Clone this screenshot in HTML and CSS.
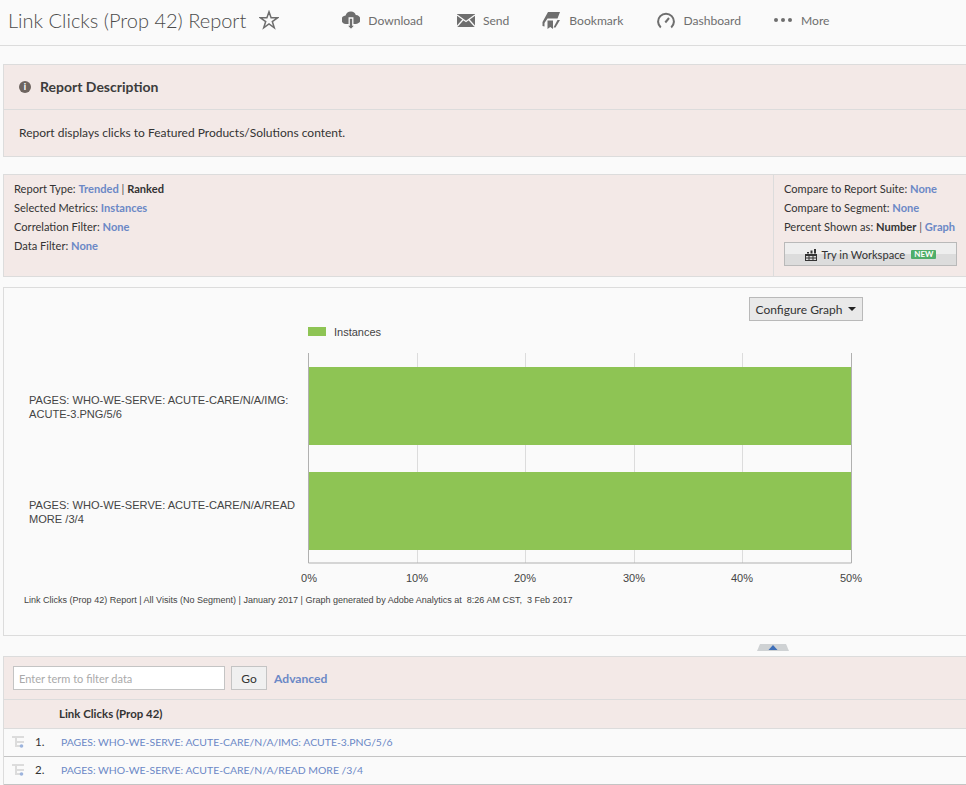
FILE: index.html
```html
<!DOCTYPE html>
<html lang="en">
<head>
<meta charset="utf-8">
<title>Link Clicks (Prop 42) Report</title>
<link rel="stylesheet" href="styles.css">
</head>
<body>
<header class="topbar">
  <h1 class="title">Link Clicks (Prop 42) Report</h1>
  <svg class="star" viewBox="0 0 20 20" width="20" height="20"><path d="M10 1.800l2.100 6h6.400l-5.200 3.800 2 6.200L10 14l-5.300 3.800 2-6.200L1.500 7.800h6.400z" fill="none" stroke="#6e6e6e" stroke-width="1.500"/></svg>
  <nav class="actions">
    <a class="action act-download"><svg viewBox="0 0 18 19" width="18" height="19"><path fill="#6e6e6e" d="M9 0.500a5 5 0 0 1 4.800 3.500A4.300 4.300 0 0 1 14 13H4A4.300 4.300 0 0 1 3.600 4.400 5.500 5.500 0 0 1 9 0.500z"/><path fill="#6e6e6e" stroke="#fafafa" stroke-width="1.300" d="M7.200 7h3.600v7h2.700L9 18.800 4.500 14h2.700z"/></svg>Download</a>
    <a class="action act-send"><svg viewBox="0 0 18 13" width="18" height="13"><path fill="#6e6e6e" d="M0 0h18v13H0z"/><path fill="none" stroke="#fafafa" stroke-width="1.300" d="M0 1l9 6.500L18 1M0 12.500l6-6.700M18 12.500l-6-6.700"/></svg>Send</a>
    <a class="action act-bookmark"><svg viewBox="0 0 18 18" width="18" height="18"><path fill="#6e6e6e" d="M6 1h12l-2.500 6.500H5.500L2.500 12v3.500L0.500 15v-4z"/><path fill="#6e6e6e" d="M5.500 9.500h5.500v8.500L8.300 16 5.500 18z"/><path fill="#6e6e6e" d="M15.500 9h2.500l-4.500 7.500h-2z"/></svg>Bookmark</a>
    <a class="action act-dash"><svg viewBox="0 0 18 17" width="18" height="17"><path fill="none" stroke="#6e6e6e" stroke-width="2" d="M3.800 15.500a7.900 7.900 0 1 1 10.400 0"/><path fill="none" stroke="#6e6e6e" stroke-width="2" d="M8.300 10.500L12 6"/></svg>Dashboard</a>
    <a class="action act-more"><span class="dots"><i></i><i></i><i></i></span>More</a>
  </nav>
</header>

<section class="panel desc">
  <div class="desc-head"><span class="info">i</span><h2>Report Description</h2></div>
  <p class="desc-body">Report displays clicks to Featured Products/Solutions content.</p>
</section>

<section class="panel meta">
  <div class="meta-left">
    <div>Report Type: <a>Trended</a> <span class="sep">|</span> <b>Ranked</b></div>
    <div>Selected Metrics: <a>Instances</a></div>
    <div>Correlation Filter: <a>None</a></div>
    <div>Data Filter: <a>None</a></div>
  </div>
  <div class="meta-right">
    <div>Compare to Report Suite: <a>None</a></div>
    <div>Compare to Segment: <a>None</a></div>
    <div>Percent Shown as: <b>Number</b> <span class="sep">|</span> <a>Graph</a></div>
    <button class="workspace"><svg viewBox="0 0 12 12" width="12" height="12"><path fill="#333" d="M0 5h12v7H0zm1 2v1.500h2.500V7zm3.500 0v1.500h3V7zm4 0v1.500H11V7zM1 9.500V11h2.500V9.500zm3.500 0V11h3V9.500zm4 0V11H11V9.500zM2 3h2v1.500H2zM5.500 1.500h2v3h-2zM9 0h2v4.500H9z"/></svg>Try in Workspace<span class="new">NEW</span></button>
  </div>
</section>

<section class="panel graph">
  <button class="configure">Configure Graph<span class="caret"></span></button>
  <svg class="chart" width="962" height="347" viewBox="4 288 962 347">
    <rect x="308" y="327" width="18" height="9" fill="#8ec454"/>
    <text class="legend" x="334" y="336">Instances</text>
    <g stroke="#dcdcdc" stroke-width="1">
      <path d="M417.500 353v210M525.500 353v210M634.500 353v210M742.500 353v210"/>
    </g>
    <rect x="309" y="367" width="542" height="78" fill="#8ec454"/>
    <rect x="309" y="472" width="542" height="78" fill="#8ec454"/>
    <path d="M308.500 353v210h543V353" fill="none" stroke="#b0b0b0"/>
    <text class="cat" x="29" y="404">PAGES: WHO-WE-SERVE: ACUTE-CARE/N/A/IMG:</text>
    <text class="cat" x="29" y="418">ACUTE-3.PNG/5/6</text>
    <text class="cat" x="29" y="509">PAGES: WHO-WE-SERVE: ACUTE-CARE/N/A/READ</text>
    <text class="cat" x="29" y="523">MORE /3/4</text>
    <g class="tick">
      <text x="309" y="582">0%</text><text x="417" y="582">10%</text><text x="525" y="582">20%</text>
      <text x="634" y="582">30%</text><text x="742" y="582">40%</text><text x="851" y="582">50%</text>
    </g>
    <text class="foot" x="24" y="603" xml:space="preserve">Link Clicks (Prop 42) Report | All Visits (No Segment) | January 2017 | Graph generated by Adobe Analytics at  8:26 AM CST,  3 Feb 2017</text>
  </svg>
</section>

<div class="collapse"><svg viewBox="0 0 32 7" width="32" height="7"><path fill="#cfd2d4" d="M3 0h26l3 7H0z"/><path fill="#3f6fb8" d="M16 1l4.500 5h-9z"/></svg></div>

<section class="panel results">
  <div class="filter">
    <input class="term" type="text" placeholder="Enter term to filter data">
    <button class="go">Go</button>
    <a class="advanced">Advanced</a>
  </div>
  <div class="thead">Link Clicks (Prop 42)</div>
  <div class="row">
    <svg class="tree" viewBox="0 0 13 13" width="13" height="13"><path fill="#dcdcdc" d="M0 1h12v2H0zM3 3h2v9H3zM5 6h7v2H5zM5 10h3v2H5z"/><circle cx="9.500" cy="11" r="1.800" fill="#9db4dd"/></svg>
    <span class="num">1.</span><a>PAGES: WHO-WE-SERVE: ACUTE-CARE/N/A/IMG: ACUTE-3.PNG/5/6</a>
  </div>
  <div class="row">
    <svg class="tree" viewBox="0 0 13 13" width="13" height="13"><path fill="#dcdcdc" d="M0 1h12v2H0zM3 3h2v9H3zM5 6h7v2H5zM5 10h3v2H5z"/><circle cx="9.500" cy="11" r="1.800" fill="#9db4dd"/></svg>
    <span class="num">2.</span><a>PAGES: WHO-WE-SERVE: ACUTE-CARE/N/A/READ MORE /3/4</a>
  </div>
</section>
</body>
</html>
```
FILE: styles.css
```css
* { box-sizing: border-box; }
html, body { height: 100%; }
body {
  margin: 0;
  background: #fafafa;
  color: #333;
  font-family: Lato, "Open Sans", sans-serif;
  font-size: 11.100px;
  overflow: hidden;
}
a { color: #6b88c6; font-weight: 700; }
b { font-weight: 700; }
.topbar {
  display: flex;
  align-items: center;
  height: 46px;
  border-bottom: 1px solid #dcdcdc;
  padding: 0 0 5px 8px;
}
.title {
  margin: 0;
  font-size: 20px;
  font-weight: 300;
  color: #4b4b4b;
  white-space: nowrap;
}
.star { margin-left: 13px; }
.actions { display: flex; align-items: center; }
.action {
  display: flex;
  align-items: center;
  gap: 8px;
  color: #6e6e6e;
  font-weight: 400;
  font-size: 12.100px;
  white-space: nowrap;
}
.act-download { margin-left: 63px; }
.act-send { margin-left: 34px; }
.act-bookmark { margin-left: 33px; gap: 9px; }
.act-dash { margin-left: 34px; }
.act-more { margin-left: 33px; gap: 9px; }
.dots { display: flex; gap: 3px; }
.dots i { width: 4px; height: 4px; border-radius: 50%; background: #6e6e6e; }

.panel {
  margin-left: 3px;
  border: 1px solid #dcdcdc;
  border-right: 0;
}
.desc { margin-top: 18px; height: 93px; background: #f3e9e7; }
.desc-head {
  display: flex;
  align-items: center;
  height: 45px;
  padding: 0 0 1px 15px;
  border-bottom: 1px solid #dcdcdc;
}
.desc-head h2 { margin: 0; font-size: 14px; font-weight: 700; color: #3c3c3c; }
.info {
  width: 12px; height: 12px; border-radius: 50%;
  background: #6e6560; color: #fff; font-size: 9px; font-weight: 900;
  display: flex; align-items: center; justify-content: center;
  margin-right: 9px;
}
.desc-body { margin: 0; padding: 15px; font-size: 12px; color: #333; }

.meta {
  margin-top: 17px;
  height: 103px;
  display: flex;
  background: #f3e9e7;
  line-height: 19px;
}
.meta-left { flex: 1; padding: 4px 10px; }
.meta-right { width: 193px; padding: 4px 10px; border-left: 1px solid #dcdcdc; white-space: nowrap; }
.sep { color: #555; }
.workspace {
  display: flex; align-items: center; justify-content: center; gap: 5px;
  width: 173px; height: 24px; margin-top: 6px; padding: 1px 0 0;
  border: 1px solid #b9b9b9;
  background: linear-gradient(#eeeeee 50%, #dcdcdc 50%);
  font: inherit; color: #333;
}
.new {
  background: #4eae6a; color: #fff; font-size: 8px; font-weight: 700;
  padding: 0 3px; line-height: 9px; border-radius: 1px; margin-left: 1px;
}

.graph {
  position: relative;
  margin-top: 10px;
  height: 349px;
  background: #fafafa;
}
.configure {
  position: absolute; left: 745px; top: 9px; z-index: 1;
  display: flex; align-items: center; justify-content: center; gap: 6px;
  width: 114px; height: 24px; padding: 0;
  border: 1px solid #b9b9b9; background: #e9e9e9;
  font: inherit; font-size: 12px; color: #333;
}
.caret { width: 0; height: 0; border: 4px solid transparent; border-top-color: #222; border-bottom: 0; }
.chart { display: block; }
.chart text { font-family: "Liberation Sans", Arial, sans-serif; fill: #444; }
.legend { font-size: 11px; }
.cat { font-size: 11.080px; }
.tick text { font-size: 11px; text-anchor: middle; }
.foot { font-size: 9.030px; white-space: pre; }

.collapse { display: flex; justify-content: flex-end; height: 20px; padding: 8px 177px 0 0; }
.collapse svg { display: block; }

.results { background: #f3e9e7; }
.filter {
  display: flex; align-items: center;
  height: 43px;
  padding-left: 9px;
  border-bottom: 1px solid #dcdcdc;
}
.term {
  width: 212px; height: 24px; padding: 0 5px;
  border: 1px solid #c4c4c4; background: #fff;
  font: inherit; font-size: 11px; color: #333;
}
.term::placeholder { color: #aaa; }
.go {
  width: 36px; height: 24px; margin-left: 6px; padding: 0;
  border: 1px solid #c4c4c4; background: #f0f0f0;
  font: inherit; font-size: 12px; color: #333;
}
.advanced { margin-left: 7px; font-size: 12.100px; }
.thead {
  height: 29px; line-height: 28px; padding-left: 55px;
  font-size: 11.450px; font-weight: 700; color: #333;
  border-bottom: 1px solid #dcdcdc;
}
.row {
  display: flex; align-items: center;
  height: 28px;
  padding: 0 0 2px 8px;
  background: #fafafa;
  border-bottom: 1px solid #c4c4c4;
}
.num { width: 26px; margin-left: 10px; color: #333; font-size: 11.500px; }
.row a { font-weight: 400; font-size: 10.430px; }
```
